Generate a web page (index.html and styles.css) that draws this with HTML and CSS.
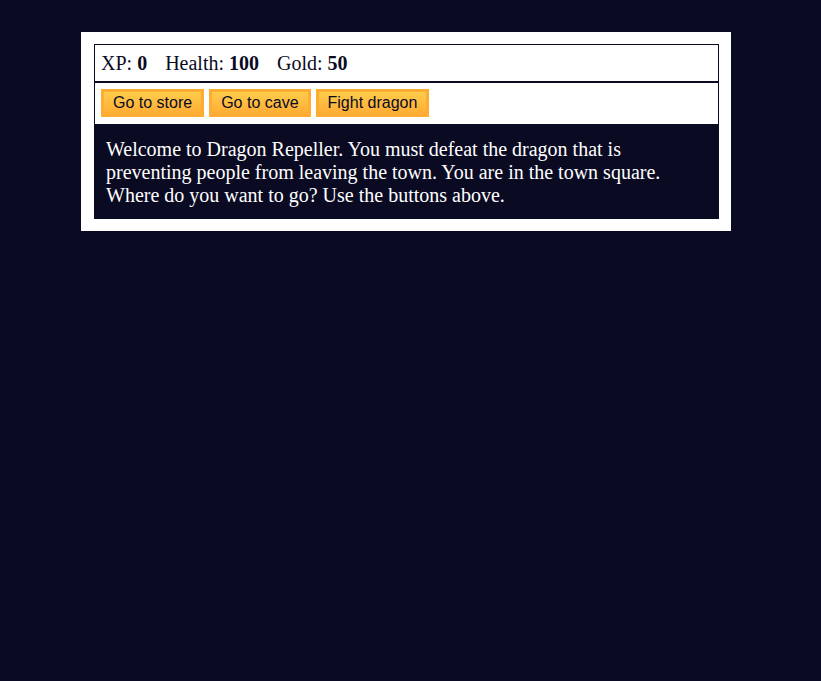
FILE: index.html
```
<!DOCTYPE html>
<html lang="en">
<head>
  <meta charset="utf-8">
  <meta name="viewport" content="width=device-width, initial-scale=1">
  <title>RPG - Dragon Repeller</title>
  <link rel="stylesheet" href="styles.css">
</head>
<body>
  <main class="game">
    <div class="stats">
      <span class="stat">XP: <strong>0</strong></span>
      <span class="stat">Health: <strong>100</strong></span>
      <span class="stat">Gold: <strong>50</strong></span>
    </div>
    <div class="controls">
      <button type="button">Go to store</button>
      <button type="button">Go to cave</button>
      <button type="button">Fight dragon</button>
    </div>
    <p class="message">Welcome to Dragon Repeller. You must defeat the dragon that is preventing people from leaving the town. You are in the town square. Where do you want to go? Use the buttons above.</p>
  </main>
</body>
</html>
```
FILE: styles.css
```
* {
  box-sizing: border-box;
}

body {
  margin: 0;
  padding: 32px 25px 32px 16px;
  background: #0a0a23;
  color: #0a0a23;
  font: 20px/23px "Liberation Serif", serif;
}

.game {
  max-width: 650px;
  margin: 0 auto;
  padding: 12px 12px 12px 13px;
  background: #fff;
}

.stats,
.controls {
  display: flex;
  flex-wrap: wrap;
  border: 1px solid #0a0a23;
  padding: 6px;
}

.stats {
  column-gap: 18px;
  padding-top: 7px;
}

.controls {
  column-gap: 5px;
  padding-bottom: 7px;
}

.controls button {
  height: 28px;
  padding: 0 9px;
  border: 3px solid #feac32;
  background: linear-gradient(#fecc4c, #ffac33);
  color: #0a0a23;
  font: 16px/20px "Liberation Sans", sans-serif;
  cursor: pointer;
}

.message {
  margin: 0;
  padding: 13px 12px 12px;
  background: #0a0a23;
  color: #fff;
}
```
